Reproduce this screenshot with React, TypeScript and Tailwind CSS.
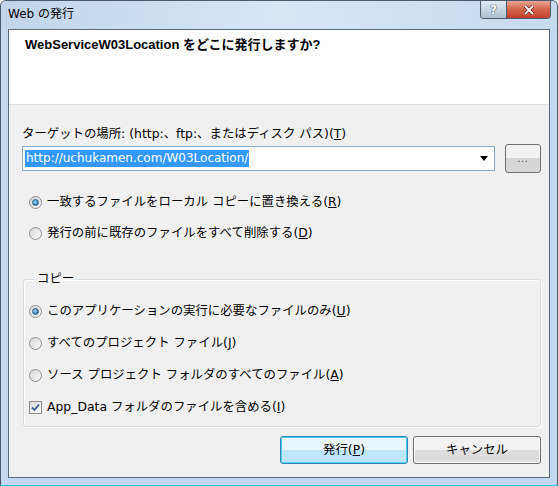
import React from "react";

const FONT = "font-['DejaVu_Sans','Noto_Sans_CJK_JP',sans-serif]";

const Radio = ({ checked }: { checked?: boolean }) => (
  <span className="flex h-[13px] w-[13px] shrink-0 items-center justify-center rounded-full border border-[#8f8f8f] bg-gradient-to-br from-[#d6d6d6] to-[#fcfcfc]">
    {checked && (
      <span className="h-[7px] w-[7px] rounded-full border border-[#2c628b] bg-[radial-gradient(circle_at_40%_40%,#a9dcfb,#3f88c0_60%,#16486f)]" />
    )}
  </span>
);

const Check = () => (
  <span className="flex h-[13px] w-[13px] shrink-0 items-center justify-center border border-[#8f8f8f] bg-gradient-to-br from-[#dcdcdc] to-[#fbfbfb]">
    <svg width="9" height="9" viewBox="0 0 9 9">
      <path d="M1 4.5 L3.5 7 L8 1.5" fill="none" stroke="#3a5c8e" strokeWidth="1.8" />
    </svg>
  </span>
);

const Option = ({
  checked,
  box,
  children,
}: {
  checked?: boolean;
  box?: boolean;
  children: React.ReactNode;
}) => (
  <div className="flex h-[16px] items-center gap-[5px]">
    {box ? <Check /> : <Radio checked={checked} />}
    <span className="whitespace-nowrap text-[12.4px] leading-[16px] text-black">{children}</span>
  </div>
);

export default function App() {
  return (
    <div className={`${FONT} flex h-[486px] w-[558px] flex-col overflow-hidden rounded-t-[6px] border border-[#4a5a6c] bg-[#c3d8ee] border-b-[#1ec3f0]`}>
      {/* Title bar */}
      <div className="flex h-[28px] shrink-0 items-start bg-gradient-to-r from-[#c0d5eb] via-[#d7e6f5] to-[#c6daee]">
        <span className="ml-[7px] mt-[5px] text-[12px] leading-[16px] text-black">Web の発行</span>
        <div className="ml-auto mr-[6px] flex h-[18px] overflow-hidden rounded-b-[4px] border border-t-0 border-[#4d5d70]">
          <div className="flex w-[26px] items-center justify-center border-r border-[#4d5d70] bg-gradient-to-b from-[#e3ebf3] via-[#c9d6e3] to-[#aebfd0] text-[12px] font-bold leading-none text-white [text-shadow:0_0_1px_#303c4a,0_0_1px_#303c4a]">
            ?
          </div>
          <div className="flex w-[43px] items-center justify-center bg-gradient-to-b from-[#e8a593] via-[#d4624a] to-[#c2402a]">
            <svg width="12" height="10" viewBox="0 0 12 10">
              <path d="M2 1 L10 9 M10 1 L2 9" stroke="#5a1f14" strokeWidth="3.2" />
              <path d="M2 1 L10 9 M10 1 L2 9" stroke="#ffffff" strokeWidth="1.8" />
            </svg>
          </div>
        </div>
      </div>

      {/* Frame + client */}
      <div className="flex flex-1 px-[7px] pb-[7px]">
        <div className="flex flex-1 flex-col border border-[#5b6b7c] bg-[#f0f0f0]">
          {/* Header */}
          <div className="h-[75px] shrink-0 border-b border-[#dfdfdf] bg-white pl-[16px] pt-[7px] font-['Liberation_Sans','Noto_Sans_CJK_JP',sans-serif] text-[13px] font-bold leading-[16px] text-black">
            WebServiceW03Location をどこに発行しますか?
          </div>

          <div className="flex flex-1 flex-col pl-[13px] pr-[8px] pt-[21px]">
            <div className="whitespace-nowrap text-[12.4px] leading-[16px] text-black">
              ターゲットの場所: (http:、ftp:、またはディスク パス)(<u>T</u>)
            </div>

            <div className="mt-[2px] flex h-[29px] items-center gap-[10px]">
              <div className="flex h-[25px] flex-1 items-center border border-[#8aa8c8] bg-white pl-[2px] pr-[6px]">
                <span className="bg-[#3399ff] px-[1px] text-[12px] leading-[17px] text-white">
                  http://uchukamen.com/W03Location/
                </span>
                <svg className="ml-auto" width="8" height="5" viewBox="0 0 8 5">
                  <path d="M0 0 H8 L4 5 Z" fill="#000" />
                </svg>
              </div>
              <div className="flex h-[29px] w-[36px] items-center justify-center rounded-[3px] border border-[#707070] bg-gradient-to-b from-[#f2f2f2] from-50% to-[#d6d6d6] to-50%">
                <span className="text-[11px] leading-none tracking-[1px] text-[#555]">…</span>
              </div>
            </div>

            <div className="ml-[7px] mt-[21px]">
              <Option checked>
                一致するファイルをローカル コピーに置き換える(<u>R</u>)
              </Option>
            </div>
            <div className="ml-[7px] mt-[15px]">
              <Option>
                発行の前に既存のファイルをすべて削除する(<u>D</u>)
              </Option>
            </div>

            <fieldset className="ml-[1px] mt-[30px] rounded-[3px] border border-[#d5dfe5] pb-[11px] pl-[5px] shadow-[inset_1px_1px_0_#fff,1px_1px_0_#fff]">
              <legend className="ml-[6px] px-[2px] text-[12.4px] leading-[16px] text-black">コピー</legend>
              <div className="flex flex-col gap-[16px] pt-[16px]">
                <Option checked>
                  このアプリケーションの実行に必要なファイルのみ(<u>U</u>)
                </Option>
                <Option>
                  すべてのプロジェクト ファイル(<u>J</u>)
                </Option>
                <Option>
                  ソース プロジェクト フォルダのすべてのファイル(<u>A</u>)
                </Option>
                <Option box>
                  App_Data フォルダのファイルを含める(<u>I</u>)
                </Option>
              </div>
            </fieldset>

            <div className="mt-[9px] flex justify-end gap-[5px]">
              <button className="flex h-[28px] w-[128px] items-center justify-center rounded-[3px] border border-[#3c7fb1] bg-gradient-to-b from-[#eaf6fd] from-50% to-[#bee6fd] to-50% text-[12.4px] leading-[16px] text-black shadow-[inset_0_0_0_1px_#48d0f7]">
                発行(<u>P</u>)
              </button>
              <button className="flex h-[28px] w-[128px] items-center justify-center rounded-[3px] border border-[#707070] bg-gradient-to-b from-[#f2f2f2] from-50% to-[#dddddd] to-50% text-[12.4px] leading-[16px] text-black shadow-[inset_0_0_0_1px_#fcfcfc]">
                キャンセル
              </button>
            </div>
          </div>
        </div>
      </div>
    </div>
  );
}
